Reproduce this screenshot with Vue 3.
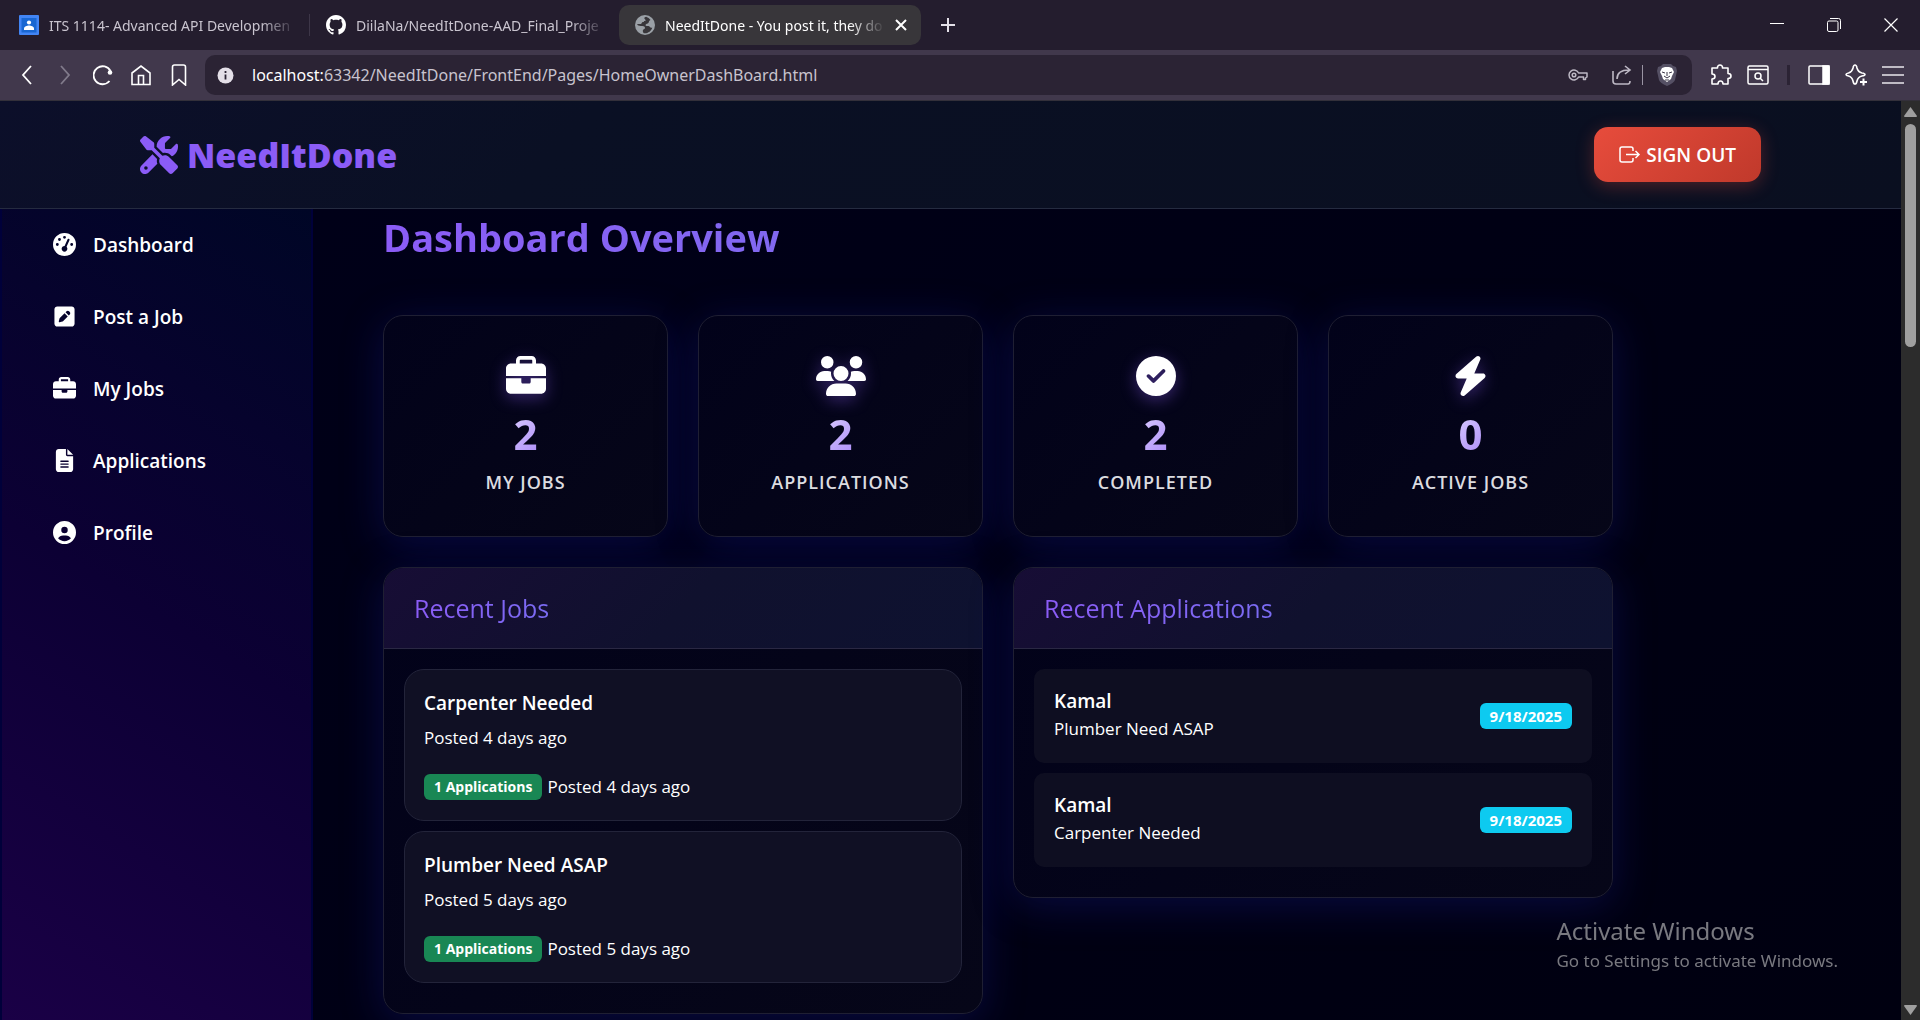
<script setup>
const tabs = [
  { id: 'classroom', title: 'ITS 1114- Advanced API Developmen', icon: 'classroom' },
  { id: 'github', title: 'DiilaNa/NeedItDone-AAD_Final_Proje', icon: 'github' },
  { id: 'needitdone', title: 'NeedItDone - You post it, they do', icon: 'globe', active: true },
]

const links = [
  { label: 'Dashboard', viewBox: '0 0 512 512', path: 'M0 256a256 256 0 1 1 512 0A256 256 0 1 1 0 256zM288 96a32 32 0 1 0 -64 0 32 32 0 1 0 64 0zM256 416c35.3 0 64-28.7 64-64c0-17.4-6.9-33.1-18.1-44.6L366 161.7c5.3-12.1-.2-26.3-12.3-31.6s-26.3 .2-31.6 12.3L257.9 288c-.6 0-1.3 0-1.9 0c-35.3 0-64 28.7-64 64s28.7 64 64 64zM176 144a32 32 0 1 0 -64 0 32 32 0 1 0 64 0zM96 288a32 32 0 1 0 0-64 32 32 0 1 0 0 64zm352-32a32 32 0 1 0 -64 0 32 32 0 1 0 64 0z' },
  { label: 'Post a Job', viewBox: '-32 0 512 512', path: 'M64 32C28.7 32 0 60.7 0 96V416c0 35.3 28.7 64 64 64H384c35.3 0 64-28.7 64-64V96c0-35.3-28.7-64-64-64H64zM325.8 139.7l14.4 14.4c15.6 15.6 15.6 40.9 0 56.6l-21.4 21.4-71-71 21.4-21.4c15.6-15.6 40.9-15.6 56.6 0zM119.9 289L225.1 183.8l71 71L190.9 359.9c-4.1 4.1-9.2 7-14.9 8.4l-60.1 15c-5.5 1.4-11.2-.2-15.2-4.2s-5.6-9.7-4.2-15.2l15-60.1c1.4-5.6 4.3-10.8 8.4-14.9z' },
  { label: 'My Jobs', viewBox: '0 0 512 512', path: 'M176 56V96H336V56c0-4.4-3.6-8-8-8H184c-4.4 0-8 3.6-8 8zM128 96V56c0-30.9 25.1-56 56-56H328c30.900 0 56 25.100 56 56V96H448c35.3 0 64 28.7 64 64v96H0V160c0-35.3 28.7-64 64-64h64zM0 288H192v32c0 17.7 14.3 32 32 32h64c17.7 0 32-14.3 32-32V288H512V416c0 35.3-28.7 64-64 64H64c-35.3 0-64-28.7-64-64V288z' },
  { label: 'Applications', viewBox: '-64 0 512 512', path: 'M64 0C28.7 0 0 28.7 0 64V448c0 35.3 28.7 64 64 64H320c35.3 0 64-28.7 64-64V160H256c-17.7 0-32-14.3-32-32V0H64zM256 0V128H384L256 0zM112 256H272c8.8 0 16 7.2 16 16s-7.2 16-16 16H112c-8.8 0-16-7.2-16-16s7.2-16 16-16zm0 64H272c8.8 0 16 7.2 16 16s-7.2 16-16 16H112c-8.8 0-16-7.2-16-16s7.2-16 16-16zm0 64H272c8.8 0 16 7.2 16 16s-7.2 16-16 16H112c-8.8 0-16-7.2-16-16s7.2-16 16-16z' },
  { label: 'Profile', viewBox: '0 0 512 512', path: 'M399 384.2C376.9 345.8 335.4 320 288 320H224c-47.4 0-88.9 25.8-111 64.2c35.2 39.2 86.2 63.8 143 63.8s107.8-24.7 143-63.8zM0 256a256 256 0 1 1 512 0A256 256 0 1 1 0 256zm256 16a72 72 0 1 0 0-144 72 72 0 1 0 0 144z' },
]

const stats = [
  { label: 'My Jobs', value: 2, viewBox: '0 0 512 512', path: 'M176 56V96H336V56c0-4.4-3.6-8-8-8H184c-4.4 0-8 3.6-8 8zM128 96V56c0-30.9 25.1-56 56-56H328c30.9 0 56 25.1 56 56V96H448c35.3 0 64 28.7 64 64v96H0V160c0-35.3 28.7-64 64-64h64zM0 284H196v44c0 15 10 24 24 24h72c14 0 24-9 24-24V284H512V420c0 35.3-28.7 64-64 64H64c-35.3 0-64-28.7-64-64V284z' },
  { label: 'Applications', value: 2, viewBox: '0 0 640 512', path: 'M144 0a80 80 0 1 1 0 160A80 80 0 1 1 144 0zM512 0a80 80 0 1 1 0 160A80 80 0 1 1 512 0zM0 298.7C0 239.8 47.8 192 106.7 192h42.7c15.9 0 31 3.5 44.6 9.7c-1.3 7.2-1.9 14.7-1.9 22.3c0 38.2 16.8 72.5 43.3 96H21.3C9.6 320 0 310.4 0 298.7zM405.3 320h-.7c26.6-23.5 43.3-57.8 43.3-96c0-7.6-.7-15-1.9-22.3c13.6-6.3 28.7-9.7 44.6-9.7h42.7C592.2 192 640 239.8 640 298.7c0 11.8-9.6 21.3-21.3 21.3H405.3zM224 224a96 96 0 1 1 192 0 96 96 0 1 1 -192 0zM128 485.3C128 411.7 187.7 352 261.3 352H378.7C452.3 352 512 411.7 512 485.3c0 14.7-11.9 26.7-26.7 26.7H154.7c-14.7 0-26.7-11.9-26.7-26.7z' },
  { label: 'Completed', value: 2, viewBox: '0 0 512 512', path: 'M256 512A256 256 0 1 0 256 0a256 256 0 1 0 0 512zM369 209L241 337c-9.4 9.4-24.6 9.4-33.9 0l-64-64c-9.4-9.4-9.4-24.6 0-33.9s24.6-9.4 33.9 0l47 47L335 175c9.4-9.4 24.6-9.4 33.9 0s9.4 24.6 0 33.9z' },
  { label: 'Active Jobs', value: 0, viewBox: '0 0 448 512', path: 'M349.4 44.6c5.9-13.7 1.5-29.7-10.6-38.5s-28.6-8-39.9 1.8l-256 224c-10 8.8-13.6 22.9-8.9 35.3S50.7 288 64 288H175.5L98.6 467.4c-5.9 13.7-1.5 29.7 10.6 38.5s28.6 8 39.9-1.8l256-224c10-8.8 13.6-22.9 8.9-35.3s-16.6-20.7-30-20.7H272.5L349.4 44.6z' },
]

const jobs = [
  { title: 'Carpenter Needed', posted: 'Posted 4 days ago', applications: 1 },
  { title: 'Plumber Need ASAP', posted: 'Posted 5 days ago', applications: 1 },
]

const applications = [
  { id: 1, name: 'Kamal', job: 'Plumber Need ASAP', date: '9/18/2025' },
  { id: 2, name: 'Kamal', job: 'Carpenter Needed', date: '9/18/2025' },
]
</script>

<template>
  <div class="browser">
    <header class="tabstrip">
      <div v-for="tab in tabs" :key="tab.id" class="tab" :class="{ active: tab.active }">
        <svg v-if="tab.icon === 'classroom'" class="favicon" viewBox="0 0 20 20">
          <rect width="20" height="20" rx="1" fill="#4285f4" />
          <rect x="2.5" y="3" width="15" height="14.5" fill="#1967d2" />
          <circle cx="10" cy="7.5" r="2.1" fill="#fff" />
          <path d="M5 15v-1.500c0-2 3-3 5-3s5 1 5 3V15z" fill="#fff" />
        </svg>
        <svg v-else-if="tab.icon === 'github'" class="favicon" viewBox="0 0 16 16" fill="#fff">
          <path d="M8 0C3.58 0 0 3.58 0 8c0 3.54 2.29 6.53 5.47 7.59.4.07.55-.17.55-.38 0-.19-.01-.82-.01-1.49-2.01.37-2.53-.49-2.69-.94-.09-.23-.48-.94-.82-1.13-.28-.15-.68-.52-.01-.53.63-.01 1.08.58 1.23.82.72 1.21 1.87.87 2.33.66.07-.52.28-.87.51-1.07-1.78-.2-3.64-.89-3.64-3.95 0-.87.31-1.59.82-2.15-.08-.2-.36-1.02.08-2.12 0 0 .67-.21 2.2.82.64-.18 1.32-.27 2-.27s1.36.09 2 .27c1.53-1.04 2.2-.82 2.2-.82.44 1.1.16 1.92.08 2.12.51.56.82 1.27.82 2.15 0 3.07-1.87 3.75-3.65 3.95.29.25.54.73.54 1.48 0 1.07-.01 1.93-.01 2.2 0 .21.15.46.55.38A8.01 8.01 0 0 0 16 8c0-4.42-3.58-8-8-8z" />
        </svg>
        <svg v-else class="favicon" viewBox="0 0 18 18">
          <circle cx="9" cy="9" r="9" fill="#9aa0a6" />
          <path d="M10 1.5c-2 .5-2 1.500-1 2.300 1.200 1 .2 2.400-1.500 2.400-1.800 0-1.200 1.800-2.600 2H2c0 2 3.400 1.600 4.600 1.600 1.600 0 2.400.8 2.400 2s-2 1-2 2.400c0 1 .4 1.800 1 2.200 3 .6 7-2 7.500-5.200-.7.600-1.600.4-2.100-.4-.6-1-2-.6-2.900-.8-1.500-.3-1.200-2 .2-2.200 1.100-.1 1.700-.8 1.800-1.700.1-.8.700-1.400 1.500-1.700A8 8 0 0 0 10 1.500z" fill="#38363a" />
        </svg>
        <span class="tab-title">{{ tab.title }}</span>
        <button v-if="tab.active" class="icon-btn" aria-label="Close tab">
          <svg width="12" height="12" viewBox="0 0 12 12" stroke="#fff" stroke-width="2"><path d="M1 1l10 10M11 1L1 11" /></svg>
        </button>
      </div>
      <button class="icon-btn new-tab" aria-label="New tab">
        <svg width="14" height="14" viewBox="0 0 14 14" stroke="#e4e0e8" stroke-width="2"><path d="M7 0v14M0 7h14" /></svg>
      </button>
      <div class="window-controls">
        <button class="icon-btn" aria-label="Minimize"><svg width="14" height="14" viewBox="0 0 14 14" stroke="#fff"><path d="M0 5.500h14" /></svg></button>
        <button class="icon-btn" aria-label="Restore"><svg width="14" height="14" viewBox="0 0 14 14" stroke="#fff" fill="none"><rect x=".5" y="3" width="10.5" height="10.5" rx="1.5" /><path d="M3 .5h8.500a2 2 0 0 1 2 2V11" /></svg></button>
        <button class="icon-btn" aria-label="Close"><svg width="14" height="14" viewBox="0 0 14 14" stroke="#fff" stroke-width="1.2"><path d="M.5.5l13 13M13.500.5l-13 13" /></svg></button>
      </div>
    </header>

    <div class="toolbar">
      <div class="nav-buttons">
        <button class="icon-btn" aria-label="Back"><svg width="20" height="22" viewBox="0 0 20 22" fill="none" stroke="#fff" stroke-width="1.8"><path d="M14 2L6 11l8 9" /></svg></button>
        <button class="icon-btn" aria-label="Forward"><svg width="20" height="22" viewBox="0 0 20 22" fill="none" stroke="#817b8b" stroke-width="1.8"><path d="M6 2l8 9-8 9" /></svg></button>
        <button class="icon-btn" aria-label="Reload"><svg width="20" height="22" viewBox="0 0 20 22" fill="none" stroke="#fff" stroke-width="1.8"><path d="M16.500 17A9 9 0 1 1 17.500 7" /><circle cx="17" cy="8.5" r="2.3" fill="#fff" stroke="none" /></svg></button>
        <button class="icon-btn" aria-label="Home"><svg width="20" height="22" viewBox="0 0 20 22" fill="none" stroke="#fff" stroke-width="1.6"><path d="M1 9L10 2l9 7v11.500H1z" /><path d="M7.500 20v-8.500h5V20" /></svg></button>
        <button class="icon-btn" aria-label="Bookmark"><svg width="20" height="22" viewBox="0 0 20 22" fill="none" stroke="#fff" stroke-width="1.6"><path d="M3.500 3q0-2 2-2h9q2 0 2 2v18l-6.500-5.500L3.500 21z" /></svg></button>
      </div>
      <div class="address">
        <svg width="17" height="17" viewBox="0 0 17 17"><circle cx="8.5" cy="8.5" r="8" fill="#e4dfe8" /><path d="M8.500 7.500v5M8.500 4v2" stroke="#2b2334" stroke-width="1.8" /></svg>
        <span class="url"><b>localhost:</b>63342/NeedItDone/FrontEnd/Pages/HomeOwnerDashBoard.html</span>
        <svg width="20" height="14" viewBox="0 0 20 14" fill="none" stroke="#bdb8c4" stroke-width="1.5"><path d="M10.600 5H19v4l-1.500 1v1.500h-2V9h-4.900A5 5 0 1 1 10.600 5z" stroke-linejoin="round" /><circle cx="6" cy="7" r="1.8" /></svg>
        <svg class="share" width="20" height="20" viewBox="0 0 20 20" fill="none" stroke="#bdb8c4" stroke-width="1.6"><path d="M1 6v10q0 3 3 3h12q2 0 2-3" /><path d="M5 14c0-6 4-9 12-9M13 1l5 4-5 4" /></svg>
        <i class="divider"></i>
        <svg width="20" height="22" viewBox="0 0 20 22"><path d="M6 0h8l2 2 3 1 1 4-2 9q-1 3-8 6-7-3-8-6L0 7l1-4 3-1z" fill="#555064" /><path d="M5 4l3-1h4l3 1 2 4-2 4-1 3-4 3-4-3-1-3-2-4z" fill="#fff" /><path d="M5 8l3 1M15 8l-3 1M10 8v4M7 12l3 2 3-2M8 16h4" stroke="#3b3647" fill="none" /></svg>
      </div>
      <div class="actions">
        <svg width="22" height="22" viewBox="0 0 22 22" fill="none" stroke="#fff" stroke-width="1.6" stroke-linejoin="round"><path d="M2 4h5.500C7 0 13 0 12.500 4H18v5.500c4 0 4 5 0 5V20h-5c0-4-5-4-5 0H2v-5c4 0 4-5 0-5z" /></svg>
        <svg width="22" height="20" viewBox="0 0 22 20" fill="none" stroke="#fff" stroke-width="1.5"><rect x="1" y="1" width="20" height="18" rx="1.5" /><path d="M1 4.500h20" /><circle cx="11" cy="11" r="3" /><path d="M13 13l3 3" /></svg>
        <i class="separator"></i>
        <svg width="22" height="20" viewBox="0 0 22 20" fill="none" stroke="#fff" stroke-width="1.5"><rect x="1" y="1" width="20" height="18" rx="1" /><path d="M15 1h6v18h-6z" fill="#fff" /></svg>
        <svg width="22" height="22" viewBox="0 0 22 22" fill="none" stroke="#fff" stroke-width="1.6" stroke-linejoin="round"><path d="M10 1q1.500 0 2 3 1 4 5 5 3 .5 3 1.500t-3 1.500q-4 1-5 5-.5 3-2 3t-2-3q-1-4-4.500-5Q1 11.500 1 10.500T3.500 9Q7 8 8 4q.5-3 2-3z" /><path d="M18.500 14.500v7M15 18h7" stroke="#41384c" stroke-width="5" /><path d="M18.500 14.500v7M15 18h7" stroke-width="2" /></svg>
        <svg width="22" height="18" viewBox="0 0 22 18" stroke="#e9e6ec" stroke-width="1.6"><path d="M0 1h22M0 9h22M0 17h22" /></svg>
      </div>
    </div>

    <div class="viewport">
      <div class="page">
        <nav class="topbar">
          <a class="brand" href="#">
            <svg viewBox="0 0 512 512" fill="currentColor"><path d="M78.6 5C69.1-2.4 55.6-1.5 47 7L7 47c-8.5 8.5-9.4 22-2.1 31.6l80 104c4.5 5.9 11.6 9.4 19 9.4h54.1l109 109c-14.7 29-10 65.4 14.3 89.6l112 112c12.5 12.5 32.8 12.5 45.3 0l64-64c12.5-12.5 12.5-32.8 0-45.3l-112-112c-24.2-24.2-60.6-29-89.6-14.3l-109-109V104c0-7.5-3.5-14.5-9.4-19L78.6 5zM19.9 396.1C7.2 408.8 0 426.1 0 444.1C0 481.6 30.4 512 67.9 512c18 0 35.3-7.2 48-19.9L233.7 374.3c-7.8-20.9-9-43.6-3.6-65.1l-61.7-61.7L19.9 396.1zM512 144c0-10.5-1.1-20.7-3.2-30.5c-2.4-11.2-16.1-14.1-24.2-6l-63.9 63.9c-3 3-7.1 4.7-11.3 4.7H352c-8.8 0-16-7.2-16-16V102.6c0-4.2 1.7-8.3 4.7-11.3l63.9-63.9c8.1-8.1 5.2-21.8-6-24.2C388.7 1.1 378.5 0 368 0C288.5 0 224 64.5 224 144l0 .8 85.3 85.3c36-9.1 75.8 .5 104 28.7L429 274.5c49-23 83-72.8 83-130.5zM56 432a24 24 0 1 1 48 0 24 24 0 1 1 -48 0z" /></svg>
            <span>NeedItDone</span>
          </a>
          <button class="signout">
            <svg width="22" height="18" viewBox="0 0 22 18" fill="none" stroke="#fff" stroke-width="1.5"><path d="M14 5V3q0-2-2-2H3Q1 1 1 3v11q0 2 2 2h9q2 0 2-2v-2" /><path d="M7 8.500h13M16.500 5l3.500 3.500-3.500 3.500" /></svg>
            SIGN OUT
          </button>
        </nav>

        <div class="body">
          <aside class="sidebar">
            <a v-for="link in links" :key="link.label" href="#">
              <svg :viewBox="link.viewBox" fill="#fff"><path fill-rule="evenodd" :d="link.path" /></svg>
              <span>{{ link.label }}</span>
            </a>
          </aside>

          <main class="content">
            <h1>Dashboard Overview</h1>
            <section class="stats">
              <article v-for="stat in stats" :key="stat.label" class="card stat">
                <svg :viewBox="stat.viewBox" fill="#fff"><path fill-rule="evenodd" :d="stat.path" /></svg>
                <strong>{{ stat.value }}</strong>
                <span>{{ stat.label }}</span>
              </article>
            </section>

            <section class="panels">
              <article class="card panel">
                <h2><span>Recent Jobs</span></h2>
                <div class="panel-body">
                  <div v-for="job in jobs" :key="job.title" class="job">
                    <h3>{{ job.title }}</h3>
                    <p>{{ job.posted }}</p>
                    <div class="meta"><span class="badge green">{{ job.applications }} Applications</span><span>{{ job.posted }}</span></div>
                  </div>
                </div>
              </article>
              <article class="card panel">
                <h2><span>Recent Applications</span></h2>
                <div class="panel-body">
                  <div v-for="item in applications" :key="item.id" class="application">
                    <div class="applicant">
                      <h3>{{ item.name }}</h3>
                      <p>{{ item.job }}</p>
                    </div>
                    <span class="badge cyan">{{ item.date }}</span>
                  </div>
                </div>
              </article>
            </section>
          </main>
        </div>
      </div>
      <div class="scrollbar">
        <svg width="13" height="10" viewBox="0 0 13 10"><path d="M6.500 0l6.500 9q0 1-1 1H1q-1 0-1-1z" fill="#9f9f9f" /></svg>
        <i class="thumb"></i>
        <svg width="13" height="10" viewBox="0 0 13 10"><path d="M6.500 10L0 1q0-1 1-1h11q1 0 1 1z" fill="#9f9f9f" /></svg>
      </div>
    </div>

    <div class="watermark">
      <p class="watermark-title">Activate Windows</p>
      <p>Go to Settings to activate Windows.</p>
    </div>
  </div>
</template>

<style>
body {
  margin: 0;
  background: #000014;
}
</style>

<style scoped>
.browser {
  display: flex;
  flex-direction: column;
  min-height: 100vh;
  font-family: "Open Sans", "Noto Sans", sans-serif;
  color: #fff;
}
.browser *,
.browser {
  box-sizing: border-box;
}
h1, h2, h3, p {
  margin: 0;
}
svg {
  display: block;
  flex: none;
}
a {
  color: inherit;
  text-decoration: none;
}
.icon-btn {
  display: flex;
  flex: none;
  padding: 0;
  border: 0;
  background: none;
}

.tabstrip {
  display: flex;
  align-items: center;
  height: 50px;
  background: #241d2e;
  font-family: "Noto Sans", sans-serif;
  font-size: 14px;
}
.tab {
  display: flex;
  align-items: center;
  gap: 10px;
  width: 309px;
  height: 40px;
  padding: 0 12px 0 16px;
  color: #c9c4cf;
}
.tab:first-child {
  width: 310px;
  padding-left: 19px;
  border-right: 1px solid #3d3648;
  border-image: linear-gradient(transparent 25%, #3d3648 25%, #3d3648 75%, transparent 75%) 1;
}
.favicon {
  width: 20px;
  height: 20px;
}
.tab-title {
  flex: 1;
  white-space: nowrap;
  mask-image: linear-gradient(to right, #000 calc(100% - 36px), transparent);
}
.tab.active {
  width: 302px;
  padding: 0 14px 0 16px;
  border-radius: 10px;
  background: #38363a;
  color: #fff;
}
.new-tab {
  margin-left: 20px;
}
.window-controls {
  display: flex;
  gap: 43px;
  margin-left: auto;
  padding-right: 22px;
}

.toolbar {
  display: flex;
  align-items: center;
  height: 51px;
  border-bottom: 1px solid #33303a;
  background: #41384c;
}
.nav-buttons {
  display: flex;
  gap: 18px;
  padding: 0 16px 0 17px;
}
.address {
  display: flex;
  flex: 1;
  align-items: center;
  height: 40px;
  padding: 0 15px 0 12px;
  border-radius: 10px;
  background: #2b2334;
  font-family: "Noto Sans", sans-serif;
  font-size: 16px;
}
.url {
  flex: 1;
  margin-left: 18px;
  color: #c8c3ce;
}
.url b {
  font-weight: 400;
  color: #fff;
}
.share {
  margin-left: 24px;
}
.divider {
  width: 1px;
  height: 20px;
  margin: 0 14px 0 10px;
  background: #9a94a3;
}
.actions {
  display: flex;
  gap: 15px;
  align-items: center;
  padding: 0 16px 0 18px;
}
.separator {
  width: 3px;
  height: 20px;
  margin: 0 3px;
  background: #2b2334;
}

.viewport {
  display: flex;
  flex: 1;
}
.page {
  display: flex;
  flex: 1;
  flex-direction: column;
}
.topbar {
  display: flex;
  align-items: center;
  justify-content: space-between;
  height: 108px;
  padding: 0 140px;
  border-bottom: 1px solid #252b40;
  background: linear-gradient(135deg, #0c0f2a, #0a1024 30%, #0a0f20);
}
.brand {
  display: flex;
  align-items: center;
  gap: 9px;
  font-size: 34px;
  font-weight: 800;
  color: #8b5cf6;
}
.brand svg {
  width: 38px;
  height: 38px;
}
.signout {
  display: flex;
  align-items: center;
  gap: 5px;
  height: 55px;
  padding: 0 25px;
  border: 0;
  border-radius: 14px;
  background: linear-gradient(135deg, #e74c3c, #c0392b);
  box-shadow: 0 4px 18px rgba(231, 76, 60, 0.3);
  font: 600 19px "Open Sans", sans-serif;
  color: #fff;
}
.body {
  display: flex;
  flex: 1;
}
.sidebar {
  width: 313px;
  padding: 0 51px;
  border: solid #00003a;
  border-width: 0 2px;
  background: linear-gradient(32deg, #1a0046, #0c0034 50%, #000626);
}
.sidebar a {
  display: flex;
  align-items: center;
  gap: 17px;
  height: 72px;
  font-size: 19px;
  font-weight: 600;
}
.sidebar svg {
  width: 23px;
  height: 23px;
  margin-bottom: 2px;
}

.content {
  flex: 1;
  padding: 0 288px 5px 70px;
  background: linear-gradient(135deg, #000018, #000010);
}
h1 {
  width: fit-content;
  margin: 3px 0 53px;
  background: linear-gradient(90deg, #8b5cf6, #8168f0);
  background-clip: text;
  font-size: 38px;
  line-height: 50px;
  color: transparent;
}
.card {
  border: 1px solid #1f1f33;
  border-radius: 20px;
  background: linear-gradient(135deg, #02021a, #060618);
  box-shadow: 0 8px 40px rgba(22, 28, 140, 0.36);
}
.stats {
  display: grid;
  grid-template-columns: repeat(4, 1fr);
  gap: 30px;
}
.stat {
  display: flex;
  flex-direction: column;
  align-items: center;
  height: 222px;
  padding-top: 40px;
}
.stat svg {
  height: 40px;
  filter: drop-shadow(0 4px 8px rgba(139, 92, 246, 0.4));
}
.stat strong {
  margin-top: 10px;
  background: linear-gradient(135deg, #ddd0ff, #a988f8);
  background-clip: text;
  font-size: 42px;
  line-height: 56px;
  color: transparent;
}
.stat span {
  margin-top: 8px;
  font-size: 18px;
  font-weight: 600;
  letter-spacing: 1px;
  text-transform: uppercase;
  color: #dcdce0;
}
.panels {
  display: grid;
  grid-template-columns: repeat(2, 1fr);
  gap: 30px;
  align-items: start;
  margin-top: 30px;
}
.panel {
  overflow: hidden;
}
h2 {
  padding: 24px 30px;
  border-bottom: 1px solid #2a2843;
  background: linear-gradient(135deg, #170d35, #10112e 50%, #0e1230);
  font-size: 25px;
  font-weight: 400;
  line-height: 32px;
}
h2 span {
  background: linear-gradient(90deg, #8b5cf6, #7a6bf2);
  background-clip: text;
  color: transparent;
}
.panel-body {
  display: flex;
  flex-direction: column;
  gap: 10px;
  padding: 20px 20px 30px;
}
.job {
  padding: 19px 19px 20px;
  border: 1px solid #23243a;
  border-radius: 20px;
  background: #101024;
  font-size: 17px;
}
h3 {
  font-size: 19px;
  font-weight: 600;
  line-height: 28px;
}
p {
  font-size: 17px;
  line-height: 27px;
}
.job h3 {
  margin-bottom: 7px;
}
.meta {
  display: flex;
  align-items: center;
  gap: 5px;
  margin-top: 23px;
  line-height: 26px;
}
.badge {
  padding: 0 10px;
  border-radius: 6px;
  font-size: 14px;
  font-weight: 700;
  line-height: 26px;
}
.green {
  background: #198754;
}
.cyan {
  background: #0dcaf0;
  font-size: 15px;
}
.application {
  display: flex;
  align-items: center;
  justify-content: space-between;
  height: 94px;
  padding: 0 20px;
  border-radius: 10px;
  background: #0e0e21;
}
.applicant {
  padding-bottom: 4px;
}

.scrollbar {
  display: flex;
  flex-direction: column;
  align-items: center;
  width: 19px;
  padding: 6px 0 5px;
  background: #2c2c2c;
}
.thumb {
  width: 11px;
  height: 223px;
  margin: 7px 0 auto;
  border-radius: 6px;
  background: #9f9f9f;
}
.watermark {
  position: fixed;
  right: 82px;
  bottom: 46px;
  font-family: "Noto Sans", sans-serif;
  color: #797980;
}
.watermark p {
  line-height: 26px;
}
.watermark .watermark-title {
  font-size: 24px;
  line-height: 34px;
}
</style>
